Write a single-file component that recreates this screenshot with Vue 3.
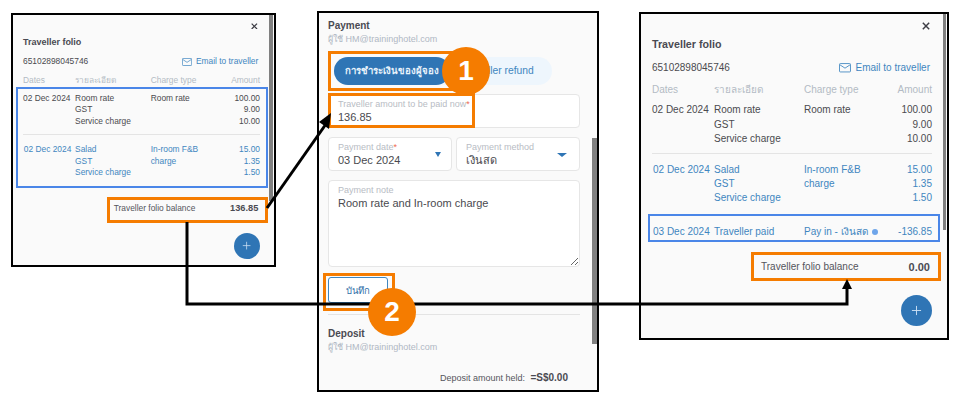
<script setup>
const firstRows = [
  {
    date: '02 Dec 2024',
    lines: ['Room rate', 'GST', 'Service charge'],
    types: ['Room rate'],
    amounts: ['100.00', '9.00', '10.00'],
    blue: false
  },
  {
    date: '02 Dec 2024',
    lines: ['Salad', 'GST', 'Service charge'],
    types: ['In-room F&B', 'charge'],
    amounts: ['15.00', '1.35', '1.50'],
    blue: true
  }
]

const folios = [
  { cls: 'folio-small', balance: '136.85', rows: firstRows, paid: false },
  { cls: 'folio-large', balance: '0.00', rows: firstRows, paid: true }
]
</script>

<template>
  <div class="canvas">
    <section v-for="folio in folios" :key="folio.cls" class="window folio" :class="folio.cls">
      <div class="scrollbar"></div>
      <div class="close-row">
        <svg class="close" viewBox="0 0 10 10"><path d="M1 1l8 8M9 1l-8 8" /></svg>
      </div>
      <h3 class="folio-title">Traveller folio</h3>
      <div class="folio-meta">
        <span>65102898045746</span>
        <span class="email">
          <svg class="mail" viewBox="0 0 14 11"><rect x="0.6" y="0.6" width="12.8" height="9.8" rx="1" /><path d="M1 2l6 4 6-4" /></svg>
          Email to traveller
        </span>
      </div>
      <div class="folio-row folio-head">
        <span>Dates</span><span>รายละเอียด</span><span>Charge type</span><span class="num">Amount</span>
      </div>
      <template v-for="(row, i) in folio.rows" :key="i">
        <div class="folio-row" :class="{ blue: row.blue }">
          <span :class="{ nudge: row.blue }">{{ row.date }}</span>
          <span><div v-for="l in row.lines" :key="l">{{ l }}</div></span>
          <span><div v-for="t in row.types" :key="t">{{ t }}</div></span>
          <span class="num"><div v-for="a in row.amounts" :key="a">{{ a }}</div></span>
        </div>
        <div v-if="i === 0" class="rule"></div>
      </template>
      <div v-if="folio.paid" class="folio-row blue paid">
        <span class="nudge">03 Dec 2024</span>
        <span>Traveller paid</span>
        <span>Pay in - เงินสด <i class="dot"></i></span>
        <span class="num">-136.85</span>
      </div>
      <div class="balance">
        <span>Traveller folio balance</span>
        <b>{{ folio.balance }}</b>
      </div>
      <div class="fab-row">
        <div class="fab">
          <svg viewBox="0 0 12 12"><path d="M6 1v10M1 6h10" /></svg>
        </div>
      </div>
      <div v-if="folio.paid" class="end-rule"></div>
    </section>

    <section class="window payment">
      <div class="scrollbar"></div>
      <h3 class="pay-title">Payment</h3>
      <p class="user">ผู้ใช้ HM@traininghotel.com</p>
      <div class="toggle">
        <span class="toggle-on">การชำระเงินของผู้จอง</span>
        <span class="toggle-off">Traveller refund</span>
      </div>
      <div class="field">
        <label>Traveller amount to be paid now<em>*</em></label>
        <div class="value">136.85</div>
      </div>
      <div class="two">
        <div class="field select">
          <label>Payment date<em>*</em></label>
          <div class="value">03 Dec 2024</div>
          <i class="caret"></i>
        </div>
        <div class="field select">
          <label>Payment method</label>
          <div class="value thai">เงินสด</div>
          <i class="caret wide"></i>
        </div>
      </div>
      <div class="field note">
        <label>Payment note</label>
        <textarea class="value">Room rate and In-room charge</textarea>
      </div>
      <button class="save">บันทึก</button>
      <div class="pay-rule"></div>
      <h3 class="pay-title">Deposit</h3>
      <p class="user">ผู้ใช้ HM@traininghotel.com</p>
      <p class="held">Deposit amount held: <b>=S$0.00</b></p>
    </section>

    <!-- annotations on top of the screenshots -->
    <div class="mark blue-box box-a"></div>
    <div class="mark blue-box box-b"></div>
    <div class="mark orange-box box-c"></div>
    <div class="mark orange-box box-d"></div>
    <div class="mark orange-box box-e"></div>
    <div class="mark orange-box box-f"></div>
    <div class="mark orange-box box-g"></div>

    <svg class="arrows" viewBox="0 0 960 406">
      <path d="M267 208L326 124" />
      <path d="M187 222V304H847V288" />
      <polygon points="331,113 319,122 329,129" />
      <polygon points="847,279 842,289 852,289" />
    </svg>

    <div class="step step-one">1</div>
    <div class="step step-two">2</div>
  </div>
</template>

<style scoped>
.canvas {
  position: relative;
  width: 960px;
  height: 406px;
  overflow: hidden;
  background: #fff;
  font-family: "Liberation Sans", "Noto Sans", sans-serif;
  color: #4a4a4f;
}

.window {
  position: absolute;
  box-sizing: border-box;
  border: 2px solid #000;
  background: #fafafa;
  overflow: hidden;
}

.scrollbar {
  position: absolute;
  background: #808080;
}

/* folio windows share em based sizes */
.folio-small {
  left: 11px;
  top: 13px;
  width: 265px;
  height: 254px;
  font-size: 8.4px;
  padding: 5px 14px 0 10px;
}

.folio-small .scrollbar {
  right: 1px;
  top: 0;
  width: 4px;
  height: 186px;
}

.folio-large {
  left: 639px;
  top: 12px;
  width: 310px;
  height: 328px;
  font-size: 10px;
  padding: 6px 15px 0 11px;
}

.folio-large .scrollbar {
  right: 1px;
  top: 0;
  width: 3px;
  height: 216px;
}

.close-row {
  display: flex;
  justify-content: flex-end;
  height: 1.2em;
}

.close {
  width: 0.8em;
  height: 0.8em;
  margin: 0.3em 0.25em 0 0;
  fill: none;
  stroke: #3c3c44;
  stroke-width: 1.8;
}

.folio-large .close {
  margin: 0.2em 0.2em 0 0;
}

.folio-title {
  margin: 0.75em 0 0;
  font-size: 1.07em;
  line-height: 1.33em;
  font-weight: 700;
  color: #4a4a52;
}

.folio-large .folio-title {
  margin-top: 0.48em;
}

.folio-meta {
  display: flex;
  justify-content: space-between;
  margin-top: 0.95em;
  padding-right: 0.2em;
  line-height: 1.4em;
  color: #4a4a4f;
}

.folio-small .folio-meta {
  margin-top: 0.83em;
}

.email {
  display: flex;
  align-items: center;
  gap: 0.5em;
  color: #3f86c0;
}

.mail {
  width: 1.2em;
  height: 0.95em;
  fill: none;
  stroke: #3f86c0;
  stroke-width: 1;
}

.folio-row {
  display: grid;
  grid-template-columns: 6.2em 9em 1fr auto;
  line-height: 1.41em;
}

.folio-head {
  margin-top: 0.8em;
  margin-bottom: 0.65em;
  color: #b3bac4;
}

.folio-small .folio-head {
  margin-top: 0.92em;
}

.num {
  text-align: right;
}

.blue {
  color: #3f86c0;
}

.nudge {
  padding-left: 0.1em;
}

.rule {
  height: 1px;
  margin: 0.7em 0 1.05em;
  background: #e4e4e4;
}

.folio-large .rule {
  margin-bottom: 0.9em;
}

.paid {
  margin-top: 1em;
  padding: 0.85em 0 0.1em;
  border-top: 1px solid #e4e4e4;
  border-bottom: 1px solid #e4e4e4;
}

.dot {
  display: inline-block;
  width: 0.6em;
  height: 0.6em;
  margin-left: 0.15em;
  border-radius: 50%;
  background: #6ea5ea;
}

.balance {
  display: flex;
  justify-content: flex-end;
  margin-top: 1.9em;
  padding-right: 0.2em;
  line-height: 1.4em;
  color: #55555c;
}

.balance span {
  margin-right: auto;
  margin-left: 10.9em;
}

.folio-small .balance {
  margin-top: 2.85em;
}

.folio-small .balance span {
  margin-left: 10.8em;
}

.balance b {
  font-size: 1.1em;
  color: #4a4a52;
}

.fab-row {
  display: flex;
  justify-content: flex-end;
  margin-top: 2.15em;
}

.fab {
  display: flex;
  align-items: center;
  justify-content: center;
  width: 3.1em;
  height: 3.1em;
  border-radius: 50%;
  background: #2f75b5;
}

.fab svg {
  width: 1.1em;
  height: 1.1em;
  fill: none;
  stroke: #cfe3f5;
  stroke-width: 1;
}

.end-rule {
  height: 1px;
  margin-top: 12px;
  background: #e4e4e4;
}

/* middle window */
.payment {
  left: 317px;
  top: 11px;
  width: 282px;
  height: 381px;
  padding: 6px 17px 0 9px;
}

.payment .scrollbar {
  right: 0;
  top: 125px;
  width: 5px;
  height: 206px;
}

.pay-title {
  margin: 0;
  font-size: 10px;
  line-height: 14px;
  font-weight: 700;
  color: #4a4a52;
}

.user {
  margin: 0;
  font-size: 9px;
  line-height: 13px;
  color: #b0b8c4;
}

.toggle {
  display: flex;
  width: 218px;
  height: 28px;
  margin: 11px 0 0 6px;
  border-radius: 14px;
  background: #eef6fd;
  font-size: 10.3px;
  line-height: 28px;
}

.toggle-on {
  width: 116px;
  border-radius: 14px;
  background: #2f75b5;
  color: #e8f2fb;
  font-size: 9.6px;
  font-weight: 700;
  text-align: center;
}

.toggle-off {
  flex: 1;
  padding-left: 12px;
  color: #3f86c0;
}

.field {
  position: relative;
  box-sizing: border-box;
  height: 34px;
  padding: 3px 9px 0;
  border: 1px solid #e6e6e6;
  border-radius: 4px;
  background: #fff;
}

.toggle + .field {
  margin-top: 9px;
}

.field label {
  display: block;
  font-size: 9px;
  line-height: 12px;
  color: #b8bcc4;
}

.field em {
  color: #ef6a50;
  font-style: normal;
}

.value {
  font-size: 11px;
  line-height: 15px;
  color: #4a4a4f;
}

.thai {
  font-weight: 400;
}

.two {
  display: grid;
  grid-template-columns: 124px 124px;
  gap: 4px;
  margin-top: 9px;
}

.caret {
  position: absolute;
  right: 10px;
  top: 14px;
  width: 0;
  height: 0;
  border-left: 3px solid transparent;
  border-right: 3px solid transparent;
  border-top: 5px solid #2f75b5;
}

.caret.wide {
  right: 12px;
  top: 15px;
  border-left-width: 5px;
  border-right-width: 5px;
  border-top-width: 4px;
}

.note {
  display: flex;
  flex-direction: column;
  height: 87px;
  margin-top: 9px;
  padding-right: 0;
  padding-bottom: 0;
}

.note textarea {
  flex: 1;
  padding: 0;
  border: 0;
  outline: 0;
  background: transparent;
  font-family: inherit;
  resize: vertical;
}

.save {
  display: block;
  width: 60px;
  height: 26px;
  margin-top: 10px;
  padding: 0;
  border: 1px solid #3f86c0;
  border-radius: 3px;
  background: #fff;
  font-family: inherit;
  font-size: 9.5px;
  color: #2f6ea8;
}

.pay-rule {
  height: 1px;
  margin: 11px 0 12px;
  background: #e4e4e4;
}

.held {
  margin: 17px 12px 0 0;
  font-size: 9px;
  line-height: 14px;
  text-align: right;
  color: #55555c;
}

.held b {
  margin-left: 3px;
  font-size: 10px;
  color: #4a4a52;
}

/* annotations */
.mark {
  position: absolute;
  box-sizing: border-box;
}

.blue-box {
  border: 2px solid #4a86e8;
}

.orange-box {
  border: 3px solid #f57c00;
}

.box-a { left: 16px; top: 87px; width: 252px; height: 101px; }
.box-b { left: 648px; top: 214px; width: 292px; height: 28px; }
.box-c { left: 107px; top: 197px; width: 161px; height: 26px; }
.box-d { left: 751px; top: 252px; width: 190px; height: 29px; }
.box-e { left: 328px; top: 51px; width: 126px; height: 40px; }
.box-f { left: 328px; top: 93px; width: 147px; height: 35px; }
.box-g { left: 323px; top: 273px; width: 72px; height: 38px; }

.arrows {
  position: absolute;
  left: 0;
  top: 0;
  width: 960px;
  height: 406px;
  pointer-events: none;
}

.arrows path {
  fill: none;
  stroke: #000;
  stroke-width: 3;
}

.arrows polygon {
  fill: #000;
}

.step {
  position: absolute;
  width: 48px;
  height: 48px;
  border-radius: 50%;
  background: #f57c00;
  color: #fff;
  font-size: 28px;
  font-weight: 700;
  line-height: 48px;
  text-align: center;
}

.step-one { left: 442px; top: 47px; }
.step-two { left: 368px; top: 288px; }
</style>

<style>
body {
  background: #fff;
}
</style>
